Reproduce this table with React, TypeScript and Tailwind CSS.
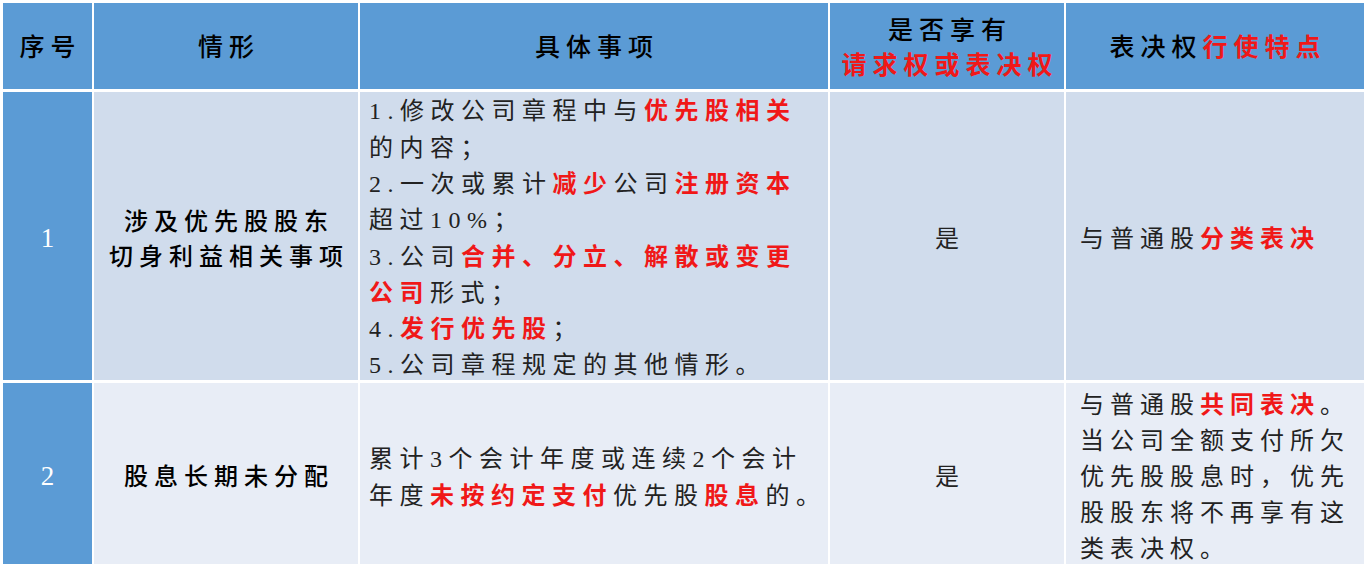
import React from "react";

const R = ({ children }: { children: React.ReactNode }) => (
  <span className="font-bold text-[#f01818]">{children}</span>
);

export default function App() {
  const font = { fontFamily: '"Liberation Serif", "Noto Sans CJK SC", serif' };
  return (
    <div className="w-[1366px] h-[584px] bg-white overflow-hidden" style={font}>
      <div className="pt-[3px] pl-[3px] grid grid-cols-[89px_264px_468px_234px_298px] grid-rows-[86px_288px_181px] gap-x-[2px] gap-y-[3px] text-[24px] tracking-[6px] leading-[35px] text-[#1a1a1a]">
        {/* Header */}
        <div className="bg-[#5b9bd5] flex items-center justify-center font-medium text-black pl-[6px] pt-[3px] text-[25px]">序号</div>
        <div className="bg-[#5b9bd5] flex items-center justify-center font-medium text-black pl-[6px] pt-[3px] text-[25px]">情形</div>
        <div className="bg-[#5b9bd5] flex items-center justify-center font-medium text-black pl-[6px] pt-[3px] text-[25px]">具体事项</div>
        <div className="bg-[#5b9bd5] flex flex-col items-center justify-center font-medium text-black pl-[6px] pt-[3px] text-[25px]">
          <div>是否享有</div>
          <div><R>请求权或表决权</R></div>
        </div>
        <div className="bg-[#5b9bd5] flex items-center justify-center font-medium text-black pl-[6px] pt-[3px] text-[25px]">
          表决权<R>行使特点</R>
        </div>

        {/* Row 1 */}
        <div className="bg-[#5b9bd5] flex items-center justify-center text-white text-[27px] pl-[6px] pt-[4px]">1</div>
        <div className="bg-[#d0dcec] flex flex-col items-center justify-center font-medium text-black pl-[6px] pt-[8px]">
          <div>涉及优先股股东</div>
          <div>切身利益相关事项</div>
        </div>
        <div className="bg-[#d0dcec] flex flex-col justify-center pl-[9px] pt-[5px] leading-[36.3px] tracking-[6.5px] text-[#222]">
          <div>1.修改公司章程中与<R>优先股相关</R></div>
          <div>的内容；</div>
          <div>2.一次或累计<R>减少</R>公司<R>注册资本</R></div>
          <div>超过10%；</div>
          <div>3.公司<R>合并、分立、解散或变更</R></div>
          <div><R>公司</R>形式；</div>
          <div>4.<R>发行优先股</R>；</div>
          <div>5.公司章程规定的其他情形。</div>
        </div>
        <div className="bg-[#d0dcec] flex items-center justify-center pl-[6px] pt-[6px] text-[#222]">是</div>
        <div className="bg-[#d0dcec] flex items-center pl-[14px] pt-[6px] text-[#222]">
          <div>与普通股<R>分类表决</R></div>
        </div>

        {/* Row 2 */}
        <div className="bg-[#5b9bd5] flex items-center justify-center text-white text-[27px] pl-[6px] pt-[6px]">2</div>
        <div className="bg-[#e8edf6] flex items-center justify-center font-medium text-black pl-[6px] pt-[8px]">股息长期未分配</div>
        <div className="bg-[#e8edf6] flex flex-col justify-center pl-[9px] leading-[37px] tracking-[6.5px] text-[#222] pt-[9px]">
          <div>累计3个会计年度或连续2个会计</div>
          <div>年度<R>未按约定支付</R>优先股<R>股息</R>的。</div>
        </div>
        <div className="bg-[#e8edf6] flex items-center justify-center pl-[6px] pt-[8px] text-[#222]">是</div>
        <div className="bg-[#e8edf6] flex flex-col justify-center pl-[14px] pt-[6px] leading-[36px] text-[#222]">
          <div>与普通股<R>共同表决</R>。</div>
          <div>当公司全额支付所欠</div>
          <div>优先股股息时，优先</div>
          <div>股股东将不再享有这</div>
          <div>类表决权。</div>
        </div>
      </div>
    </div>
  );
}
